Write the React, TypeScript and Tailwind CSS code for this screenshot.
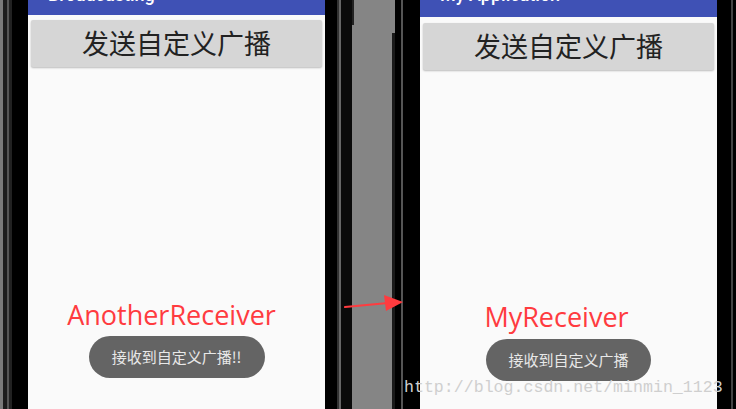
const cjk = { fontFamily: '"Noto Sans CJK SC", "Noto Sans", sans-serif' }

function Screen({
  title,
  barH,
  btnTop,
  label,
  labelPos,
  toast,
  toastTop,
  toastW,
}: {
  title: string
  barH: string
  btnTop: string
  label: string
  labelPos: string
  toast: string
  toastTop: string
  toastW: string
}) {
  return (
    <div className="flex h-full w-[297px] shrink-0 flex-col bg-[#fafafa]">
      <div className={`${barH} overflow-hidden bg-[#3f51b5] px-[20px]`}>
        <div className="-mt-[18px] text-[18px] font-medium leading-[26px] text-white" style={{ fontFamily: 'Roboto, sans-serif' }}>
          {title}
        </div>
      </div>
      <div
        className={`${btnTop} mx-[3px] flex h-[47px] items-center justify-center rounded-[2px] bg-[#d6d6d6] text-[27px] text-[#222] shadow-[0_1px_2px_rgba(0,0,0,0.25)]`}
        style={cjk}
      >
        发送自定义广播
      </div>
      <div
        className={`${labelPos} text-center text-[27px] leading-[34px] text-[#ff3b3f]`}
        style={{ fontFamily: '"Open Sans", sans-serif' }}
      >
        {label}
      </div>
      <div className={`${toastTop} flex justify-center`}>
        <div
          className={`${toastW} flex h-[42px] items-center justify-center rounded-full bg-[#646464] text-[15px] text-[#e8e8e8]`}
          style={cjk}
        >
          {toast}
        </div>
      </div>
    </div>
  )
}

export default function App() {
  return (
    <div className="relative flex h-[409px] w-[736px] overflow-hidden bg-black">
      {/* left bezel */}
      <div className="flex h-full w-[28px] shrink-0">
        <div className="w-[3px] bg-[#7a7a7a]" />
        <div className="w-[4px] bg-[#1c1c1c]" />
        <div className="w-[2px] bg-[#555]" />
        <div className="w-[3px] bg-[#222]" />
        <div className="w-[16px] bg-black" />
      </div>

      <Screen
        title="Broadcasting"
        barH="h-[15px]"
        btnTop="mt-[5px]"
        label="AnotherReceiver"
        labelPos="mt-[231px] pr-[10px]"
        toast="接收到自定义广播!!"
        toastTop="mt-[4px]"
        toastW="w-[176px]"
      />

      {/* middle gap between phones */}
      <div className="flex h-full w-[95px] shrink-0">
        <div className="w-[12px] bg-black" />
        <div className="w-[2px] bg-[#333]" />
        <div className="w-[2px] bg-[#666]" />
        <div className="w-[11px] bg-[#0a0a0a]" />
        <div className="relative w-[43px] bg-[#858585]">
          <div className="absolute left-0 top-0 h-[25px] w-[2px] bg-[#222]" />
          <div className="absolute right-0 top-[33px] bottom-0 w-[3px] bg-[#1a1a1a]" />
        </div>
        <div className="w-[6px] bg-black" />
        <div className="w-[2px] bg-[#555]" />
        <div className="w-[17px] bg-black" />
      </div>

      <Screen
        title="My Application"
        barH="h-[17px]"
        btnTop="mt-[6px]"
        label="MyReceiver"
        labelPos="mt-[230px] pr-[24px]"
        toast="接收到自定义广播"
        toastTop="mt-[5px]"
        toastW="w-[165px]"
      />

      {/* right bezel */}
      <div className="flex h-full w-[19px] shrink-0">
        <div className="w-[14px] bg-black" />
        <div className="w-[2px] bg-[#444]" />
        <div className="w-[3px] bg-black" />
      </div>

      {/* annotation arrow */}
      <svg className="absolute left-[344px] top-[292px]" width="62" height="22" viewBox="0 0 62 22">
        <path d="M1 15 L44 11" stroke="#ff3b3f" strokeWidth="2.2" strokeLinecap="round" />
        <path d="M40 3 L59 10 L42 19 Z" fill="#ff3b3f" />
      </svg>

      {/* watermark */}
      <div
        className="absolute left-[404px] top-[378px] text-[16.6px] leading-[20px] text-[#cfcfcf]"
        style={{ fontFamily: '"Liberation Mono", monospace' }}
      >
        http://blog.csdn.net/minmin_1123
      </div>
    </div>
  )
}
